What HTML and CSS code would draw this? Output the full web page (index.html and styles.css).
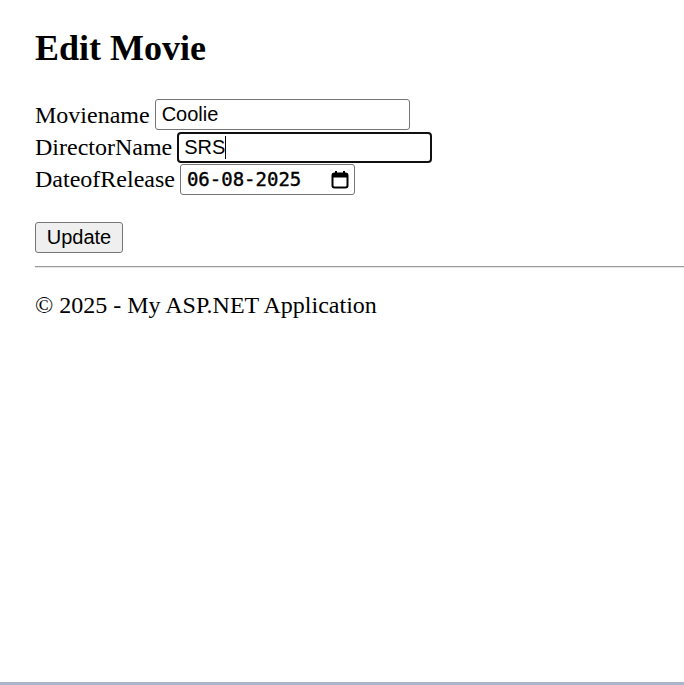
FILE: index.html
```html
<!DOCTYPE html>
<html>
<head>
<meta charset="utf-8">
<title>Edit Movie</title>
<link rel="stylesheet" href="styles.css">
</head>
<body>
<main class="page">
  <h2 class="title">Edit Movie</h2>
  <form class="form">
    <div class="row">
      <span class="label">Moviename</span>
      <span class="field">Coolie</span>
    </div>
    <div class="row">
      <span class="label">DirectorName</span>
      <span class="field focused">SRS<span class="caret"></span></span>
    </div>
    <div class="row">
      <span class="label">DateofRelease</span>
      <span class="field date"><span class="date-text">06-08-2025</span>
        <svg class="cal" width="18" height="19" viewBox="0 0 18 19" aria-hidden="true">
          <rect x="1.5" y="3.5" width="15" height="14" rx="2" fill="none" stroke="#000" stroke-width="2"/>
          <rect x="1.5" y="3.5" width="15" height="4" fill="#000"/>
          <rect x="4" y="1" width="2" height="4" fill="#000"/>
          <rect x="12" y="1" width="2" height="4" fill="#000"/>
        </svg>
      </span>
    </div>
    <button type="button" class="btn">Update</button>
  </form>
  <hr class="rule">
  <footer class="footer">© 2025 - My ASP.NET Application</footer>
</main>
<div class="frame-edge"></div>
</body>
</html>
```
FILE: styles.css
```css
html, body {
  margin: 0;
  padding: 0;
  background: #fff;
}
body {
  font-family: "Liberation Serif", "Times New Roman", serif;
  font-size: 24px;
  color: #000;
}
.page {
  padding: 28px 0 0 35px;
}
.title {
  font-size: 36px;
  font-weight: bold;
  margin: 0 0 30px 0;
  line-height: 41px;
}
.form {
  margin: 0;
}
.row {
  display: flex;
  align-items: center;
  height: 32px;
}
.label {
  line-height: 27px;
}
.field {
  box-sizing: border-box;
  display: inline-flex;
  align-items: center;
  height: 31px;
  width: 255px;
  margin-left: 5px;
  border: 1px solid #767676;
  border-radius: 3px;
  padding: 0 6px;
  font-family: "Liberation Sans", Arial, sans-serif;
  font-size: 20px;
  background: #fff;
}
.row:first-child .field {
  align-self: flex-start;
}
.focused {
  border: 2px solid #101010;
  border-radius: 4px;
  padding-left: 5px;
}
.caret {
  display: inline-block;
  width: 1px;
  height: 23px;
  background: #000;
}
.date {
  width: 175px;
  padding-left: 6px;
  padding-right: 5px;
  justify-content: space-between;
}
.date-text {
  font-family: "DejaVu Sans Mono", "Liberation Mono", monospace;
  font-size: 19px;
  font-weight: normal;
  -webkit-text-stroke: 0.4px #000;
}
.cal {
  display: block;
}
.btn {
  display: block;
  box-sizing: border-box;
  margin-top: 27px;
  width: 88px;
  height: 31px;
  padding: 0;
  font-family: "Liberation Sans", Arial, sans-serif;
  font-size: 20px;
  color: #000;
  background: #efefef;
  border: 1px solid #767676;
  border-radius: 3px;
}
.rule {
  margin: 13px 0 0 0;
  border: 0;
  border-top: 1px solid #9a9a9a;
  border-bottom: 1px solid #e4e4e4;
  height: 0;
}
.footer {
  margin-top: 24px;
  line-height: 27px;
}
.frame-edge {
  position: fixed;
  left: 0;
  right: 0;
  bottom: 0;
  height: 3px;
  background: #abb5cb;
}
```
